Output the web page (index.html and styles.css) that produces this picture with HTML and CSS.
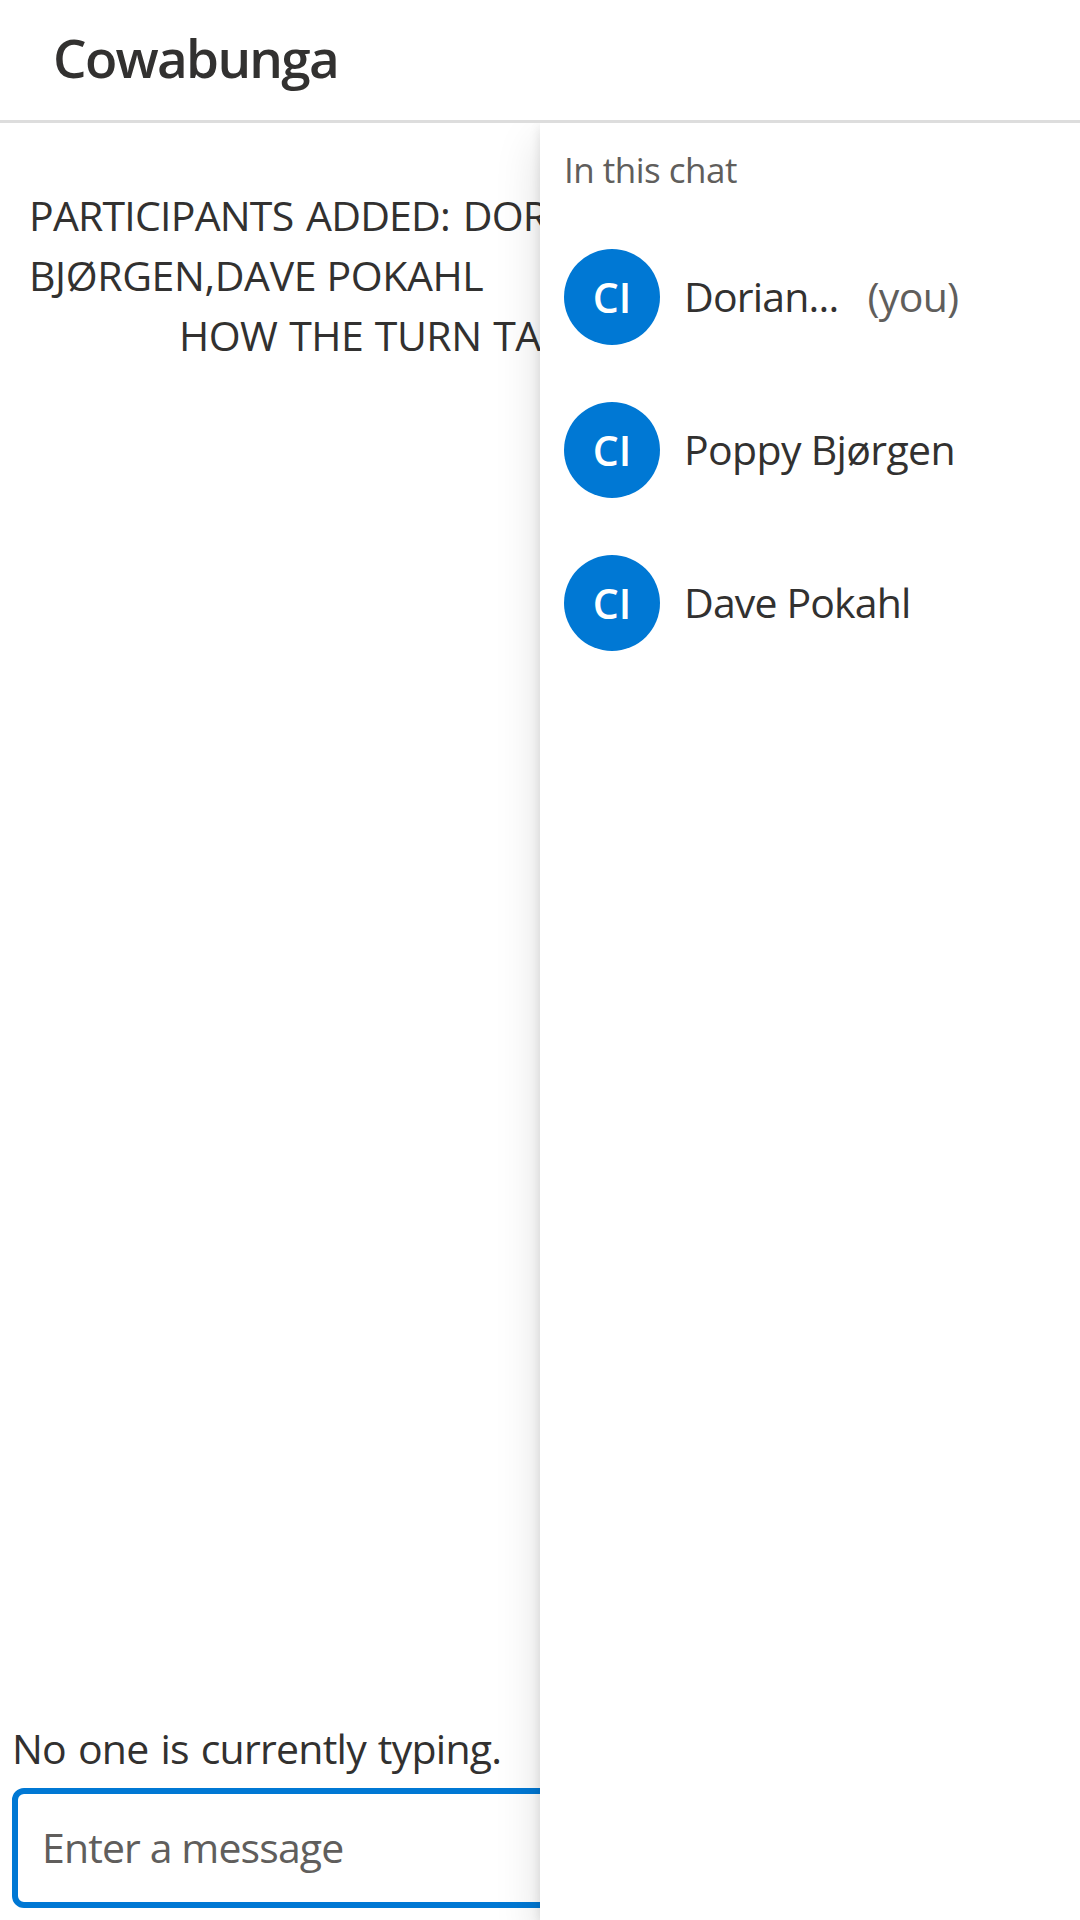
FILE: index.html
```
<!DOCTYPE html>
<html lang="en">
<head>
<meta charset="utf-8">
<title>Cowabunga</title>
<link rel="stylesheet" href="styles.css">
</head>
<body>
<div class="app">
  <header class="header"><h1 class="title">Cowabunga</h1></header>
  <main class="content">
    <section class="chat">
      <div class="thread">
        <div class="line line-added">PARTICIPANTS ADDED: DOR</div>
        <div class="line line-names">BJØRGEN,DAVE POKAHL</div>
        <div class="line line-topic">HOW THE TURN TA</div>
      </div>
      <div class="typing">No one is currently typing.</div>
      <div class="sendbox"><span class="placeholder">Enter a message</span></div>
    </section>
    <aside class="panel">
      <h2 class="panel-title">In this chat</h2>
      <ul class="people">
        <li class="person"><span class="avatar">CI</span><span class="name name-self">Dorian...</span><span class="you">(you)</span></li>
        <li class="person"><span class="avatar">CI</span><span class="name name-poppy">Poppy Bjørgen</span></li>
        <li class="person"><span class="avatar">CI</span><span class="name name-dave">Dave Pokahl</span></li>
      </ul>
    </aside>
  </main>
</div>
</body>
</html>
```
FILE: styles.css
```
* { box-sizing: border-box; }

body {
  margin: 0;
  background: #fff;
  color: #323130;
  font-family: "Open Sans", "Noto Sans", sans-serif;
  font-size: 41px;
  line-height: 60px;
}

.app {
  display: flex;
  flex-direction: column;
  width: 1080px;
  height: 1920px;
  overflow: hidden;
}

.header {
  flex: none;
  height: 123px;
  padding: 22px 53px 0;
  border-bottom: 3px solid #dddddd;
}

.title {
  margin: 0;
  font-size: 53px;
  font-weight: 600;
  line-height: 72px;
  letter-spacing: -1.7px;
}

.content {
  position: relative;
  flex: 1;
  display: flex;
  overflow: hidden;
}

.chat {
  flex: 1;
  display: flex;
  flex-direction: column;
  padding: 62px 12px 12px;
}

.thread {
  flex: 1;
  padding-left: 17px;
  white-space: nowrap;
}

.line-added { letter-spacing: -0.78px; word-spacing: 2.8px; }
.line-names { letter-spacing: -0.38px; }
.line-topic { padding-left: 150px; letter-spacing: -0.5px; word-spacing: 1.5px; }

.typing {
  padding-bottom: 10px;
  letter-spacing: -0.75px;
  word-spacing: 2px;
}

.sendbox {
  display: flex;
  align-items: center;
  height: 120px;
  padding: 0 24px 2px 24px;
  border: 6px solid #0078d4;
  border-radius: 12px;
}

.placeholder {
  color: #605e5c;
  letter-spacing: -0.88px;
}

/* Participant list, slides over the right half of the chat */
.panel {
  position: absolute;
  top: 0;
  right: 0;
  bottom: 0;
  width: 540px;
  padding: 23px 24px 0;
  background: #fff;
  box-shadow: 0 19.2px 43.2px rgba(0, 0, 0, 0.132), 0 3.6px 10.8px rgba(0, 0, 0, 0.108);
}

.panel-title {
  margin: 0;
  color: #605e5c;
  font-size: 35px;
  font-weight: 400;
  line-height: 48px;
  letter-spacing: -0.51px;
}

.people {
  display: flex;
  flex-direction: column;
  gap: 57px;
  margin: 0;
  padding: 55px 0 0;
  list-style: none;
}

.person {
  display: flex;
  align-items: center;
  height: 96px;
}

.avatar {
  flex: none;
  width: 96px;
  height: 96px;
  border-radius: 50%;
  background: #0078d4;
  color: #fff;
  font-weight: 600;
  line-height: 96px;
  text-align: center;
}

.name {
  padding: 0 0 2px 24px;
}

.name-self { letter-spacing: -0.81px; }
.name-poppy { letter-spacing: -0.65px; }
.name-dave { letter-spacing: -0.85px; }

.you {
  padding: 0 0 2px 29px;
  color: #605e5c;
  letter-spacing: -0.7px;
}
```
